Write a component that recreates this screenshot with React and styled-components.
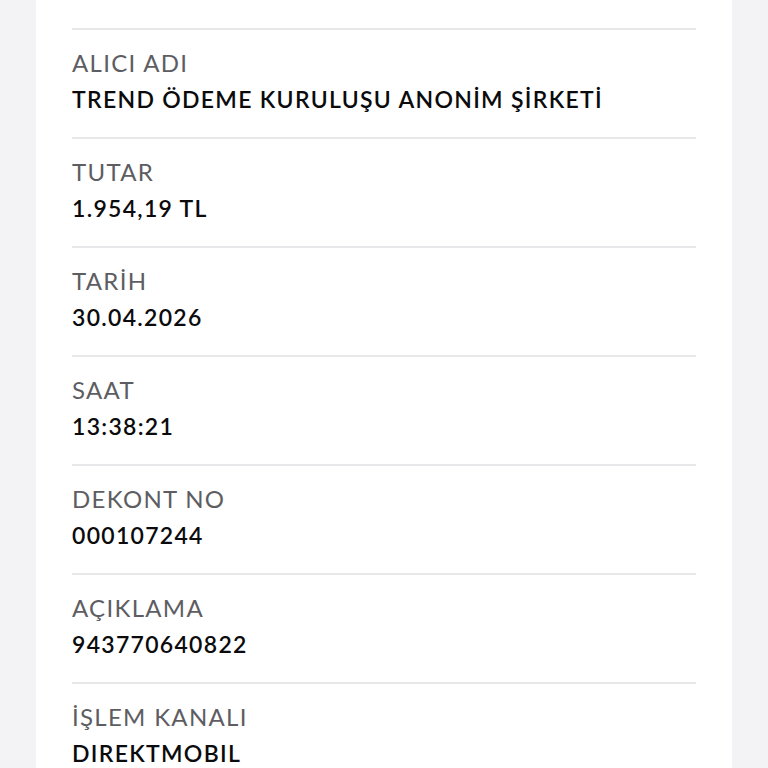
import React from "react"
import styled, { createGlobalStyle } from "styled-components"

const GlobalStyle = createGlobalStyle`
  html, body {
    margin: 0;
    padding: 0;
    background: #f3f3f5;
    overflow: hidden;
  }
  body {
    font-family: Lato, "Noto Sans", "DejaVu Sans", sans-serif;
    -webkit-font-smoothing: antialiased;
  }
`

const Page = styled.div`
  height: 768px;
  overflow: hidden;
`

const Card = styled.div`
  margin: 0 36px;
  padding: 0 36px;
  background: #ffffff;
  min-height: 768px;
`

const List = styled.div`
  display: flex;
  flex-direction: column;
  margin-top: -79px;
`

const Row = styled.div`
  display: flex;
  flex-direction: column;
  gap: 8px;
  padding: 18px 0 24px;
  border-top: ${(p) => (p.$first ? "none" : "2px solid #e8e8ea")};
`

const Label = styled.div`
  font-size: 24px;
  line-height: 29px;
  font-weight: 400;
  color: #5d5d62;
  letter-spacing: 1.3px;
`

const Value = styled.div`
  font-size: 23px;
  line-height: 28px;
  font-weight: 600;
  color: #0b0b0d;
  letter-spacing: 1.3px;
`

const rows = [
  { label: "ALICI IBAN", value: "TR34 0001 5001 5800 7306 0817 24" },
  { label: "ALICI ADI", value: "TREND ÖDEME KURULUŞU ANONİM ŞİRKETİ" },
  { label: "TUTAR", value: "1.954,19 TL" },
  { label: "TARİH", value: "30.04.2026" },
  { label: "SAAT", value: "13:38:21" },
  { label: "DEKONT NO", value: "000107244" },
  { label: "AÇIKLAMA", value: "943770640822" },
  { label: "İŞLEM KANALI", value: "DIREKTMOBIL" },
]

export default function App() {
  return (
    <Page>
      <GlobalStyle />
      <Card>
        <List>
          {rows.map((r, i) => (
            <Row key={r.label} $first={i === 0}>
              <Label>{r.label}</Label>
              <Value>{r.value}</Value>
            </Row>
          ))}
        </List>
      </Card>
    </Page>
  )
}
